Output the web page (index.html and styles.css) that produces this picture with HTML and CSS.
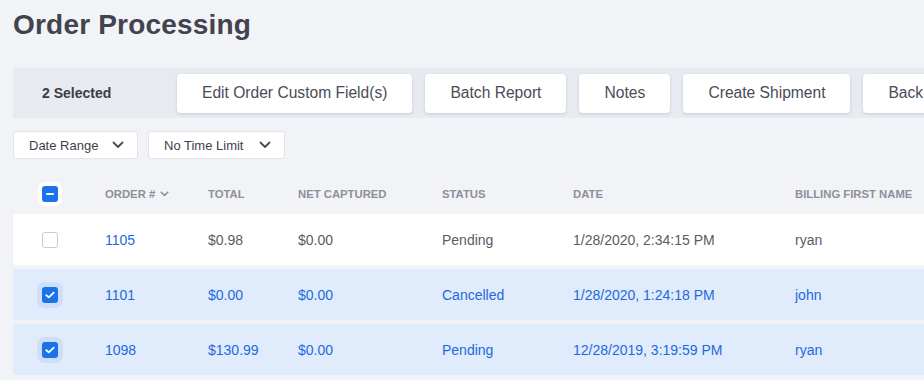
FILE: index.html
```html
<!DOCTYPE html>
<html lang="en">
<head>
    <meta charset="UTF-8">
    <title>Order Processing</title>
    <link rel="stylesheet" href="styles.css">
</head>
<body>
    <h1 class="title">Order Processing</h1>

    <div class="toolbar">
        <span class="selected-count">2 Selected</span>
        <button class="tool-btn">Edit Order Custom Field(s)</button>
        <button class="tool-btn">Batch Report</button>
        <button class="tool-btn notes">Notes</button>
        <button class="tool-btn">Create Shipment</button>
        <button class="tool-btn">Back Order</button>
    </div>

    <div class="filters">
        <button class="select">Date Range
            <svg class="chev" width="12" height="8" viewBox="0 0 12 8"><path d="M1.5 1.5 6 6l4.5-4.5" fill="none" stroke="currentColor" stroke-width="1.8" stroke-linecap="round" stroke-linejoin="round"/></svg>
        </button>
        <button class="select">No Time Limit
            <svg class="chev" width="12" height="8" viewBox="0 0 12 8"><path d="M1.5 1.5 6 6l4.5-4.5" fill="none" stroke="currentColor" stroke-width="1.8" stroke-linecap="round" stroke-linejoin="round"/></svg>
        </button>
    </div>

    <div class="orders">
        <div class="row head">
            <div class="cell check"><span class="box partial"><span class="dash"></span></span></div>
            <div class="cell">ORDER #
                <svg class="sort" width="9" height="6" viewBox="0 0 9 6"><path d="M1.2 1.2 4.5 4.5 7.8 1.2" fill="none" stroke="currentColor" stroke-width="1.6" stroke-linecap="round" stroke-linejoin="round"/></svg>
            </div>
            <div class="cell">TOTAL</div>
            <div class="cell">NET CAPTURED</div>
            <div class="cell">STATUS</div>
            <div class="cell">DATE</div>
            <div class="cell">BILLING FIRST NAME</div>
        </div>

        <div class="row">
            <div class="cell check"><span class="box"></span></div>
            <div class="cell link">1105</div>
            <div class="cell">$0.98</div>
            <div class="cell">$0.00</div>
            <div class="cell">Pending</div>
            <div class="cell">1/28/2020, 2:34:15 PM</div>
            <div class="cell">ryan</div>
        </div>

        <div class="row picked">
            <div class="cell check"><span class="box on"><svg width="10" height="8" viewBox="0 0 10 8"><path d="M1.3 4.2 3.8 6.4 8.7 1.6" fill="none" stroke="#fff" stroke-width="1.8" stroke-linecap="round" stroke-linejoin="round"/></svg></span></div>
            <div class="cell">1101</div>
            <div class="cell">$0.00</div>
            <div class="cell">$0.00</div>
            <div class="cell">Cancelled</div>
            <div class="cell">1/28/2020, 1:24:18 PM</div>
            <div class="cell">john</div>
        </div>

        <div class="row picked">
            <div class="cell check"><span class="box on"><svg width="10" height="8" viewBox="0 0 10 8"><path d="M1.3 4.2 3.8 6.4 8.7 1.6" fill="none" stroke="#fff" stroke-width="1.8" stroke-linecap="round" stroke-linejoin="round"/></svg></span></div>
            <div class="cell">1098</div>
            <div class="cell">$130.99</div>
            <div class="cell">$0.00</div>
            <div class="cell">Pending</div>
            <div class="cell">12/28/2019, 3:19:59 PM</div>
            <div class="cell">ryan</div>
        </div>
    </div>
</body>
</html>
```

FILE: styles.css
```css
body {
    margin: 0;
    padding: 0 0 0 13px;
    background: #f2f3f7;
    font-family: "Liberation Sans", Arial, sans-serif;
    color: #3e3f4a;
    overflow: hidden;
    white-space: nowrap;
}
.title {
    margin: 0;
    padding-top: 9px;
    height: 68px;
    box-sizing: border-box;
    font-size: 28px;
    font-weight: bold;
    letter-spacing: 0.2px;
    color: #42434d;
}
.toolbar {
    display: flex;
    align-items: center;
    gap: 13px;
    height: 50px;
    background: #e7eaf0;
    padding-left: 29px;
}
.selected-count {
    flex: none;
    font-size: 14px;
    font-weight: bold;
    color: #3b3c46;
    width: 122px;
}
.tool-btn {
    flex: none;
    height: 39px;
    padding: 0 25px;
    background: #fff;
    border: none;
    border-radius: 4px;
    box-shadow: 0 1px 3px rgba(120, 140, 170, 0.3);
    font-family: inherit;
    font-size: 15.6px;
    color: #4a4b57;
}
.tool-btn.notes {
    width: 91px;
}
.filters {
    display: flex;
    gap: 10px;
    margin-top: 13px;
}
.select {
    display: flex;
    align-items: center;
    justify-content: space-between;
    height: 28px;
    padding: 0 13px 0 15px;
    background: #fff;
    border: 1px solid #e1e3ea;
    border-radius: 3px;
    font-family: inherit;
    font-size: 13px;
    color: #3e3f4a;
}
.select:first-child {
    width: 125px;
}
.select:last-child {
    width: 137px;
}
.chev {
    color: #4a4b57;
}
.orders {
    margin-top: 19px;
    display: flex;
    flex-direction: column;
    gap: 4px;
}
.row {
    display: grid;
    grid-template-columns: 92px 103px 90px 144px 131px 222px 1fr;
    align-items: center;
    height: 51px;
    background: #fff;
    border-radius: 3px 0 0 3px;
    font-size: 14px;
    color: #5a5b66;
}
.row.head {
    height: 32px;
    background: none;
    font-size: 11.3px;
    font-weight: bold;
    color: #8e8f9b;
}
.row.picked {
    background: #e0ebfb;
    color: #1d6ae0;
}
.link {
    color: #1d6ae0;
}
.cell {
    display: flex;
    align-items: center;
}
.sort {
    margin-left: 5px;
    color: #8e8f9b;
}
.check {
    padding-left: 29px;
}
.box {
    display: flex;
    align-items: center;
    justify-content: center;
    width: 14px;
    height: 14px;
    border: 1px solid #c9cbd3;
    border-radius: 3px;
    background: #fff;
}
.box.on,
.box.partial {
    width: 16px;
    height: 16px;
    border: none;
    background: #1a73e8;
    box-shadow: 0 0 0 5px #cfdff9;
    border-radius: 3px;
}
.box.partial {
    box-shadow: 0 0 0 4px #fff;
}
.dash {
    width: 8px;
    height: 2px;
    border-radius: 1px;
    background: #fff;
}
```
